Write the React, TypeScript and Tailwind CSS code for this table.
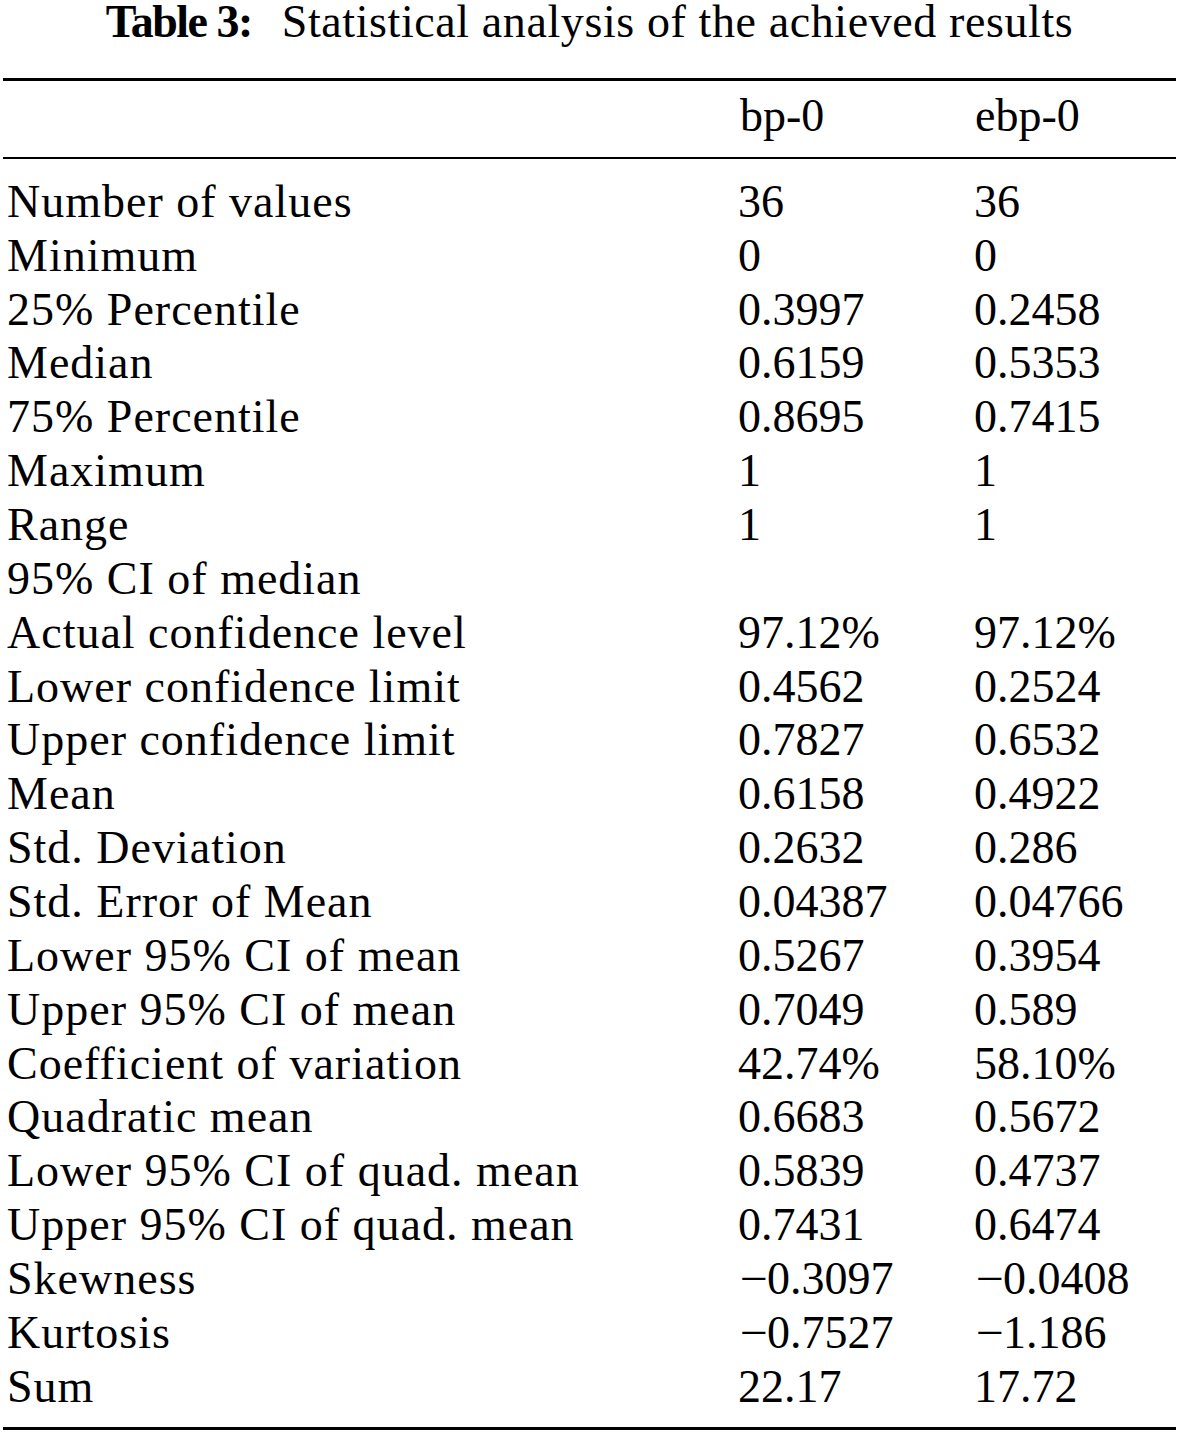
import React from "react";

const M = "\u2212";

const rows: [string, string, string][] = [
  ["Number of values", "36", "36"],
  ["Minimum", "0", "0"],
  ["25% Percentile", "0.3997", "0.2458"],
  ["Median", "0.6159", "0.5353"],
  ["75% Percentile", "0.8695", "0.7415"],
  ["Maximum", "1", "1"],
  ["Range", "1", "1"],
  ["95% CI of median", "", ""],
  ["Actual confidence level", "97.12%", "97.12%"],
  ["Lower confidence limit", "0.4562", "0.2524"],
  ["Upper confidence limit", "0.7827", "0.6532"],
  ["Mean", "0.6158", "0.4922"],
  ["Std. Deviation", "0.2632", "0.286"],
  ["Std. Error of Mean", "0.04387", "0.04766"],
  ["Lower 95% CI of mean", "0.5267", "0.3954"],
  ["Upper 95% CI of mean", "0.7049", "0.589"],
  ["Coefficient of variation", "42.74%", "58.10%"],
  ["Quadratic mean", "0.6683", "0.5672"],
  ["Lower 95% CI of quad. mean", "0.5839", "0.4737"],
  ["Upper 95% CI of quad. mean", "0.7431", "0.6474"],
  ["Skewness", M + "0.3097", M + "0.0408"],
  ["Kurtosis", M + "0.7527", M + "1.186"],
  ["Sum", "22.17", "17.72"],
];

function Num({ v }: { v: string }) {
  if (v.startsWith(M)) {
    return (
      <div>
        <span className="inline-block w-[29px] pl-[2px]">
          <span className="inline-block origin-left scale-x-[1.08]">{M}</span>
        </span>
        {v.slice(1)}
      </div>
    );
  }
  return <div>{v}</div>;
}

export default function App() {
  return (
    <div className="w-[1179px] h-[1433px] bg-white text-black font-['Liberation_Serif','Times_New_Roman',serif] text-[46px]">
      <div className="h-[43px] leading-[43px] text-center whitespace-nowrap">
        <span className="font-bold tracking-[-1.5px]">Table 3:</span>
        <span className="ml-[30px] tracking-[0.6px]">Statistical analysis of the achieved results</span>
      </div>
      <div className="mx-[3px] mt-[35px]">
        <div className="h-[3px] bg-black" />
        <div className="grid grid-cols-[735px_236px_1fr] leading-[53.86px] pt-[8px] pb-[14px]">
          <div className="pl-[4px]" />
          <div className="pl-[2px]">bp-0</div>
          <div className="pl-[1px]">ebp-0</div>
        </div>
        <div className="h-[2px] bg-black" />
        <div className="pt-[16px] pb-[13px]">
          {rows.map(([label, a, b]) => (
            <div
              key={label}
              className="grid grid-cols-[735px_236px_1fr] leading-[53.86px] h-[53.86px] whitespace-nowrap"
            >
              <div className="pl-[4px] tracking-[1px]">{label}</div>
              <Num v={a} />
              <Num v={b} />
            </div>
          ))}
        </div>
        <div className="h-[3px] bg-black" />
      </div>
    </div>
  );
}
